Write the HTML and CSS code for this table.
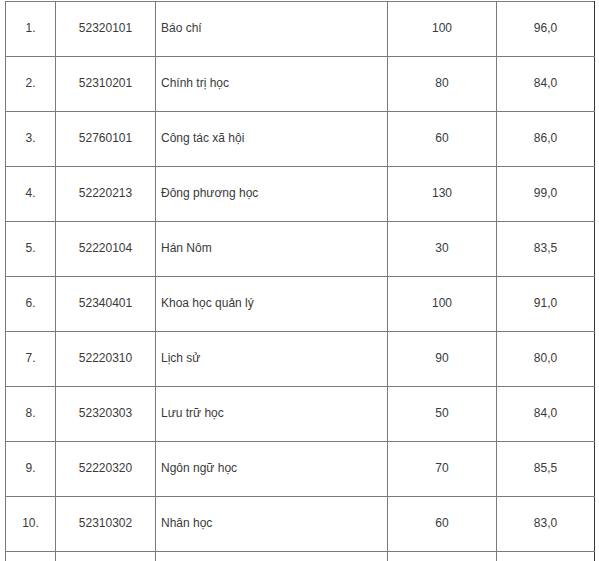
FILE: index.html
```html
<!DOCTYPE html>
<html lang="vi">
<head>
<meta charset="utf-8">
<link rel="stylesheet" href="styles.css">
</head>
<body>
<table class="grid">
<colgroup>
<col class="c-no"><col class="c-code"><col class="c-name"><col class="c-quota"><col class="c-score">
</colgroup>
<tbody>
<tr><td class="ctr">1.</td><td class="ctr">52320101</td><td class="txt">Báo chí</td><td class="ctr">100</td><td class="ctr">96,0</td></tr>
<tr><td class="ctr">2.</td><td class="ctr">52310201</td><td class="txt">Chính trị học</td><td class="ctr">80</td><td class="ctr">84,0</td></tr>
<tr><td class="ctr">3.</td><td class="ctr">52760101</td><td class="txt">Công tác xã hội</td><td class="ctr">60</td><td class="ctr">86,0</td></tr>
<tr><td class="ctr">4.</td><td class="ctr">52220213</td><td class="txt">Đông phương học</td><td class="ctr">130</td><td class="ctr">99,0</td></tr>
<tr><td class="ctr">5.</td><td class="ctr">52220104</td><td class="txt">Hán Nôm</td><td class="ctr">30</td><td class="ctr">83,5</td></tr>
<tr><td class="ctr">6.</td><td class="ctr">52340401</td><td class="txt">Khoa học quản lý</td><td class="ctr">100</td><td class="ctr">91,0</td></tr>
<tr><td class="ctr">7.</td><td class="ctr">52220310</td><td class="txt">Lịch sử</td><td class="ctr">90</td><td class="ctr">80,0</td></tr>
<tr><td class="ctr">8.</td><td class="ctr">52320303</td><td class="txt">Lưu trữ học</td><td class="ctr">50</td><td class="ctr">84,0</td></tr>
<tr><td class="ctr">9.</td><td class="ctr">52220320</td><td class="txt">Ngôn ngữ học</td><td class="ctr">70</td><td class="ctr">85,5</td></tr>
<tr><td class="ctr">10.</td><td class="ctr">52310302</td><td class="txt">Nhân học</td><td class="ctr">60</td><td class="ctr">83,0</td></tr>
<tr class="partial"><td></td><td></td><td></td><td></td><td></td></tr>
</tbody>
</table>
</body>
</html>
```
FILE: styles.css
```css
html, body {
  margin: 0;
  padding: 0;
  background: #fff;
}
body {
  padding: 1px 0 0 5px;
  font-family: "Liberation Sans", Arial, sans-serif;
  font-size: 12px;
  color: #3a3a3a;
  overflow: hidden;
}
.grid {
  border-collapse: collapse;
  table-layout: fixed;
  width: 589px;
}
.c-no { width: 50px; }
.c-code { width: 100px; }
.c-name { width: 232px; }
.c-quota { width: 109px; }
.c-score { width: 98px; }
.grid td {
  border: 1px solid #7a7a7a;
  height: 55px;
  padding: 0 5px 2px;
  vertical-align: middle;
  box-sizing: border-box;
  line-height: 14px;
}
.grid td:last-child {
  border-right-color: #333;
}
.ctr { text-align: center; }
.txt { text-align: left; }
```
